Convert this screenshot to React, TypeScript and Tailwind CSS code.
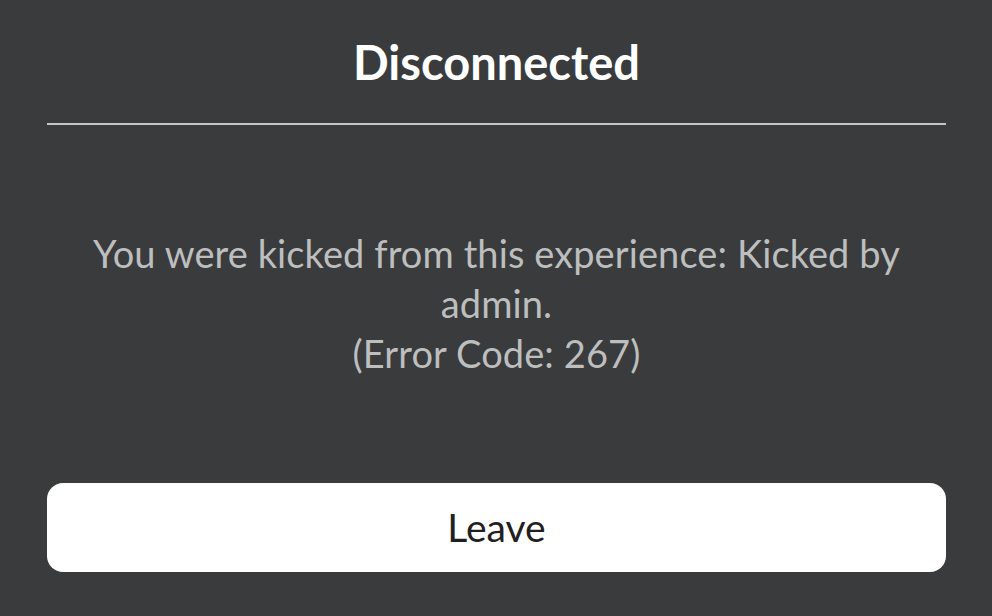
export default function App() {
  return (
    <div
      className="w-[992px] h-[616px] bg-[#393b3d] flex flex-col pl-[47px] pr-[46px]"
      style={{ fontFamily: 'Lato, "Open Sans", sans-serif' }}
    >
      {/* Title */}
      <div className="h-[123px] flex items-center justify-center pt-[1px]">
        <h1 className="text-[47px] font-bold text-white leading-none">Disconnected</h1>
      </div>
      <div className="h-[2px] bg-[#c4c4c4]" />

      {/* Message */}
      <div className="flex-1 flex items-center justify-center pb-[2px]">
        <p className="text-center text-[38px] leading-[50px] text-[#bdbebe] tracking-[0.1px]">
          You were kicked from this experience: Kicked by admin.
          <br />
          (Error Code: 267)
        </p>
      </div>

      {/* Leave button */}
      <button className="h-[89px] mb-[44px] rounded-[16px] bg-white text-[#1f2021] text-[39px] flex items-center justify-center">
        Leave
      </button>
    </div>
  )
}
